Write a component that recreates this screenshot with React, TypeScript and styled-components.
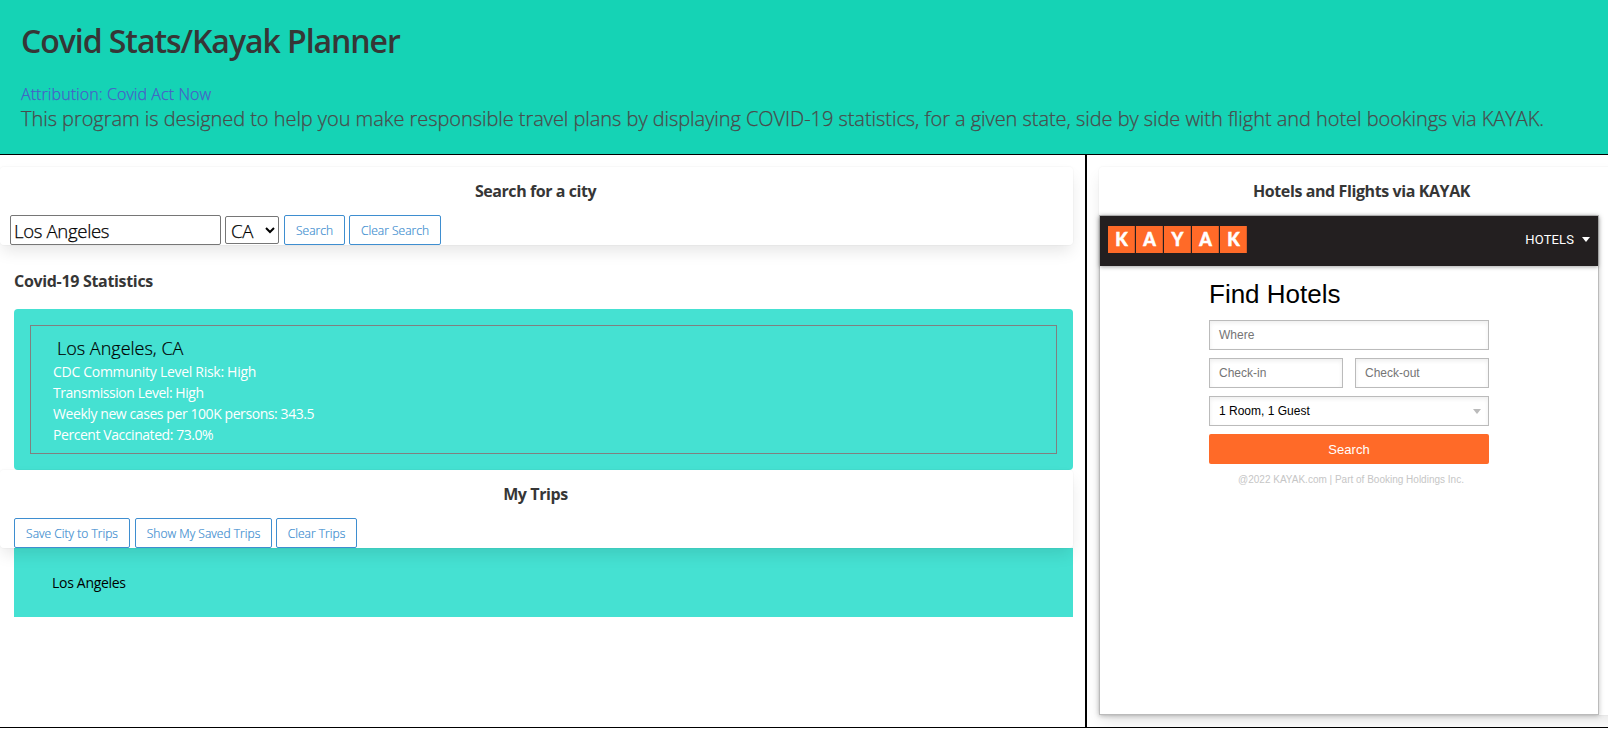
import React from 'react';
import styled, { createGlobalStyle } from 'styled-components';

const sans = `"Open Sans", "Noto Sans", sans-serif`;
const arial = `"Liberation Sans", Arial, sans-serif`;

const GlobalStyle = createGlobalStyle`
  *, *::before, *::after { box-sizing: border-box; }
  html, body { margin: 0; background: #fff; overflow: hidden; }
  body { font-family: ${sans}; color: #363636; }
  h1, h2, h3, p, ul { margin: 0; padding: 0; font-weight: inherit; }
`;

const Page = styled.div`
  width: 1608px;
  height: 730px;
  display: flex;
  flex-direction: column;
`;

const Header = styled.header`
  height: 155px;
  flex: none;
  padding: 17px 21px 0;
  background: #15d3b5;
  border-bottom: 1px solid #000;
`;

const Title = styled.h1`
  font-size: 32px;
  line-height: 48px;
  font-weight: 600;
  letter-spacing: -1.05px;
`;

const Attribution = styled.a`
  display: block;
  margin-top: 17px;
  font-size: 16px;
  line-height: 24px;
  font-weight: 300;
  letter-spacing: 0.08px;
  -webkit-text-stroke: 0.25px;
  color: #485fc7;
`;

const Intro = styled.p`
  font-size: 20px;
  line-height: 26px;
  font-weight: 300;
  letter-spacing: -0.048px;
  -webkit-text-stroke: 0.25px;
  color: #4a4a4a;
  white-space: nowrap;
`;

const Columns = styled.main`
  display: flex;
  flex: none;
  height: 573px;
  overflow: hidden;
  border-bottom: 1px solid #000;
`;

const PlannerColumn = styled.section`
  flex: none;
  width: 1085px;
  padding: 12px 12px 0 0;
`;

const KayakColumn = styled.section`
  flex: none;
  width: 535px;
  padding: 12px 0 0 12px;
  border-left: 2px solid #000;
`;

const Card = styled.div<{ $height: number }>`
  position: relative;
  height: ${(p) => p.$height}px;
  border-radius: 4px;
  background: #fff;
  box-shadow: 0 8px 16px -2px rgba(10, 10, 10, 0.1), 0 0 0 1px rgba(10, 10, 10, 0.02);
`;

const CardTitle = styled.h2<{ $spacing: number; $shift?: number }>`
  height: 48px;
  padding-top: 12px;
  margin-left: ${(p) => p.$shift ?? 0}px;
  text-align: center;
  font-size: 16px;
  line-height: 24px;
  font-weight: 700;
  letter-spacing: ${(p) => p.$spacing}px;
`;

const Controls = styled.div<{ $inset: number }>`
  display: flex;
  align-items: center;
  gap: 4px;
  padding-left: ${(p) => p.$inset}px;
`;

const CityInput = styled.input`
  width: 211px;
  height: 30px;
  padding: 0 3px;
  border: 1px solid #767676;
  border-radius: 2px;
  background: #fff;
  color: #000;
  font: 300 18.6px ${sans};
  letter-spacing: -0.35px;
  -webkit-text-stroke: 0.25px;
`;

const StateSelect = styled.select`
  width: 54px;
  height: 28px;
  padding: 0 0 0 1px;
  border: 1px solid #767676;
  border-radius: 2px;
  background: #fff;
  color: #000;
  font: 300 18.6px ${sans};
  letter-spacing: -0.4px;
  -webkit-text-stroke: 0.25px;
`;

const Button = styled.button<{ $width: number; $spaced?: boolean }>`
  width: ${(p) => p.$width}px;
  height: 30px;
  margin: ${(p) => (p.$spaced ? '0 0 0 1px' : '0')};
  padding: 1px 0 0;
  border: 1px solid #3e8ed0;
  border-radius: 2px;
  background: #fff;
  color: #3e8ed0;
  font: 300 12px ${sans};
  letter-spacing: 0.02px;
  -webkit-text-stroke: 0.2px;
  white-space: nowrap;
`;

const SectionTitle = styled.h2`
  padding: 24px 0 16px 14px;
  font-size: 16px;
  line-height: 24px;
  font-weight: 700;
  letter-spacing: -0.32px;
`;

const StatsPanel = styled.div`
  height: 161px;
  margin-left: 14px;
  padding: 16px;
  border-radius: 4px;
  background: #45e1d2;
`;

const StatsBox = styled.div`
  height: 129px;
  padding: 10px 22px 0;
  border: 1px solid #808080;
`;

const Place = styled.h3`
  padding: 0 0 1px 4px;
  font-size: 18px;
  line-height: 24px;
  font-weight: 300;
  -webkit-text-stroke: 0.2px;
  color: #000;
`;

const Stat = styled.p<{ $spacing: number }>`
  font-size: 14px;
  line-height: 21px;
  letter-spacing: ${(p) => p.$spacing}px;
  color: #fff;
`;

const TripList = styled.ul`
  height: 69px;
  margin-left: 14px;
  padding: 24px 38px;
  list-style: none;
  background: #45e1d2;
  font-size: 14px;
  line-height: 21px;
  letter-spacing: -0.3px;
  color: #000;
`;

const Widget = styled.div`
  width: 500px;
  height: 500px;
  border: 1px solid #bbb;
  background: #fff;
  box-shadow: 0 1px 5px rgba(0, 0, 0, 0.25);
  font-family: ${arial};
`;

const WidgetBar = styled.div`
  display: flex;
  justify-content: space-between;
  height: 50px;
  padding: 10px 8px 0;
  background: #231f20;
  box-shadow: 0 1px 4px rgba(0, 0, 0, 0.35);
`;

const Logo = styled.div`
  display: flex;
  height: 27px;
`;

const Tile = styled.span`
  display: flex;
  align-items: center;
  justify-content: center;
  width: 28px;
  height: 27px;
  border-right: 1px solid #231f20;
  box-shadow: inset -1px 0 0 #d75c28;
  background: #ff6a28;
  color: #fff;
  font: 900 18px/27px Lato, ${sans};
  -webkit-text-stroke: 0.5px;
`;

const Mode = styled.div`
  display: flex;
  gap: 8px;
  height: 26px;
  align-items: center;
  color: #fff;
  font: 400 13px Roboto, ${arial};
  letter-spacing: 0.12px;
`;

const Caret = styled.span<{ $color: string }>`
  border: 4px solid transparent;
  border-top: 5px solid ${(p) => p.$color};
  border-bottom: 0;
`;

const SearchForm = styled.div`
  display: flex;
  flex-direction: column;
  gap: 8px;
  width: 280px;
  margin: 12px 0 0 109px;
`;

const FormTitle = styled.h3`
  height: 34px;
  padding-top: 1px;
  font-size: 26px;
  line-height: 31px;
  color: #000;
`;

const DateRow = styled.div`
  display: flex;
  gap: 12px;
`;

const Field = styled.div<{ $filled?: boolean }>`
  display: flex;
  flex: 1 1 0;
  align-items: center;
  justify-content: space-between;
  min-height: 30px;
  padding: 0 7px 0 9px;
  border: 1px solid #bbb;
  background: #fff;
  box-shadow: inset 0 2px 4px rgba(0, 0, 0, 0.07);
  font-size: 12px;
  color: ${(p) => (p.$filled ? '#000' : '#757575')};
`;

const SubmitButton = styled.button`
  height: 30px;
  padding: 0;
  border: 0;
  border-radius: 2px;
  background: #ff6a28;
  color: #fff;
  font: 13px ${arial};
  letter-spacing: 0.05px;
`;

const Legal = styled.p`
  padding-left: 4px;
  margin-top: 2px;
  text-align: center;
  font-size: 10px;
  line-height: 11px;
  color: #c6c6c6;
`;

const stats = [
  { text: 'CDC Community Level Risk: High', spacing: -0.29 },
  { text: 'Transmission Level: High', spacing: -0.45 },
  { text: 'Weekly new cases per 100K persons: 343.5', spacing: -0.42 },
  { text: 'Percent Vaccinated: 73.0%', spacing: -0.44 },
];

export default function App() {
  return (
    <Page>
      <GlobalStyle />
      <Header>
        <Title>Covid Stats/Kayak Planner</Title>
        <Attribution>Attribution: Covid Act Now</Attribution>
        <Intro>
          This program is designed to help you make responsible travel plans by displaying COVID-19
          statistics, for a given state, side by side with flight and hotel bookings via KAYAK.
        </Intro>
      </Header>
      <Columns>
        <PlannerColumn>
          <Card $height={78}>
            <CardTitle $spacing={-0.44} $shift={-2}>
              Search for a city
            </CardTitle>
            <Controls $inset={10}>
              <CityInput defaultValue="Los Angeles" />
              <StateSelect defaultValue="CA">
                <option>CA</option>
              </StateSelect>
              <Button $width={61} $spaced>
                Search
              </Button>
              <Button $width={92}>Clear Search</Button>
            </Controls>
          </Card>
          <SectionTitle>Covid-19 Statistics</SectionTitle>
          <StatsPanel>
            <StatsBox>
              <Place>Los Angeles, CA</Place>
              {stats.map((s) => (
                <Stat key={s.text} $spacing={s.spacing}>
                  {s.text}
                </Stat>
              ))}
            </StatsBox>
          </StatsPanel>
          <Card $height={78}>
            <CardTitle $spacing={-0.4} $shift={-2}>
              My Trips
            </CardTitle>
            <Controls $inset={14}>
              <Button $width={116}>Save City to Trips</Button>
              <Button $width={137} $spaced>
                Show My Saved Trips
              </Button>
              <Button $width={81}>Clear Trips</Button>
            </Controls>
          </Card>
          <TripList>
            <li>Los Angeles</li>
          </TripList>
        </PlannerColumn>
        <KayakColumn>
          <Card $height={548}>
            <CardTitle $spacing={-0.4} $shift={4}>
              Hotels and Flights via KAYAK
            </CardTitle>
            <Widget>
              <WidgetBar>
                <Logo>
                  {['K', 'A', 'Y', 'A', 'K'].map((letter, i) => (
                    <Tile key={i}>{letter}</Tile>
                  ))}
                </Logo>
                <Mode>
                  HOTELS
                  <Caret $color="#fff" />
                </Mode>
              </WidgetBar>
              <SearchForm>
                <FormTitle>Find Hotels</FormTitle>
                <Field>Where</Field>
                <DateRow>
                  <Field>Check-in</Field>
                  <Field>Check-out</Field>
                </DateRow>
                <Field $filled>
                  1 Room, 1 Guest
                  <Caret $color="#bbb" />
                </Field>
                <SubmitButton>Search</SubmitButton>
                <Legal>@2022 KAYAK.com | Part of Booking Holdings Inc.</Legal>
              </SearchForm>
            </Widget>
          </Card>
        </KayakColumn>
      </Columns>
    </Page>
  );
}
